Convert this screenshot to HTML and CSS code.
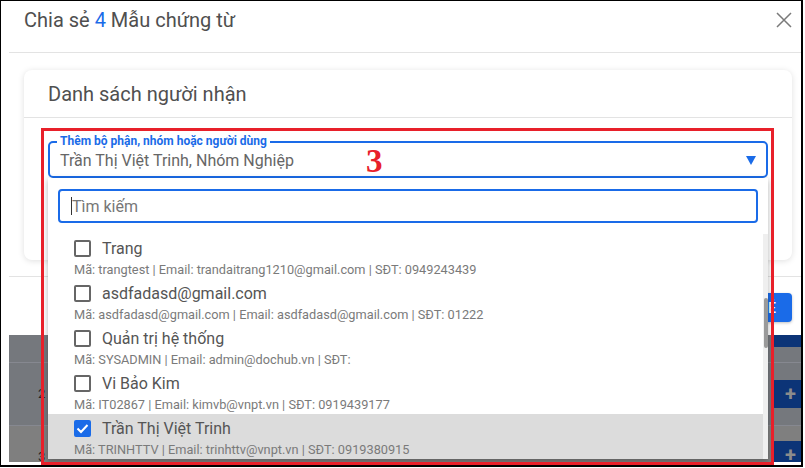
FILE: index.html
```html
<!DOCTYPE html>
<html lang="vi">
<head>
<meta charset="utf-8">
<title>Chia sẻ</title>
<link rel="stylesheet" href="styles.css">
</head>
<body>
<div class="frame">
  <div class="modal">
    <div class="modal-header">
      <div class="modal-title">Chia sẻ <span class="count">4</span> Mẫu chứng từ</div>
      <svg class="close" width="16" height="16" viewBox="0 0 16 16"><path d="M1 1 L15 15 M15 1 L1 15" stroke="#7a7a7a" stroke-width="1.5" fill="none"/></svg>
    </div>
    <div class="modal-body">
      <div class="card">
        <div class="card-header">Danh sách người nhận</div>
        <div class="card-body">
          <div class="select">
            <span class="select-label">Thêm bộ phận, nhóm hoặc người dùng</span>
            <span class="select-value">Trần Thị Việt Trinh, Nhóm Nghiệp</span>
            <svg class="arrow" width="10" height="9" viewBox="0 0 10 9"><polygon points="0,0 10,0 5,9" fill="#1a6be8"/></svg>
          </div>
          <div class="dropdown">
            <div class="search"><span class="caret"></span><span class="placeholder">Tìm kiếm</span></div>
            <div class="list-wrap">
              <div class="list">
                <div class="item">
                  <div class="item-main"><span class="cb"></span><span class="name">Trang</span></div>
                  <div class="sub">Mã: trangtest | Email: trandaitrang1210@gmail.com | SĐT: 0949243439</div>
                </div>
                <div class="item">
                  <div class="item-main"><span class="cb"></span><span class="name">asdfadasd@gmail.com</span></div>
                  <div class="sub">Mã: asdfadasd@gmail.com | Email: asdfadasd@gmail.com | SĐT: 01222</div>
                </div>
                <div class="item">
                  <div class="item-main"><span class="cb"></span><span class="name">Quản trị hệ thống</span></div>
                  <div class="sub">Mã: SYSADMIN | Email: admin@dochub.vn | SĐT:</div>
                </div>
                <div class="item">
                  <div class="item-main"><span class="cb"></span><span class="name">Vi Bảo Kim</span></div>
                  <div class="sub">Mã: IT02867 | Email: kimvb@vnpt.vn | SĐT: 0919439177</div>
                </div>
                <div class="item selected">
                  <div class="item-main"><span class="cb checked"><svg width="13" height="13" viewBox="0 0 13 13"><path d="M1.5 6.5 L5 10 L11.5 3" stroke="#fff" stroke-width="2" fill="none"/></svg></span><span class="name">Trần Thị Việt Trinh</span></div>
                  <div class="sub">Mã: TRINHTTV | Email: trinhttv@vnpt.vn | SĐT: 0919380915</div>
                </div>
              </div>
              <div class="scrollbar"><div class="thumb"></div></div>
            </div>
          </div>
        </div>
      </div>
    </div>
    <div class="modal-footer">
      <button class="btn-primary">CHIA SẺ</button>
    </div>
  </div>
  <div class="backdrop">
    <div class="row row-top"><span class="row-btn partial"></span></div>
    <div class="row"><span class="num">2</span><span class="row-btn">+</span></div>
    <div class="row row-alt"><span class="num">3</span><span class="row-btn">+</span></div>
  </div>
  <div class="annot"></div>
  <div class="annot-num">3</div>
</div>
</body>
</html>
```
FILE: styles.css
```css
* { box-sizing: border-box; }
html, body { margin: 0; padding: 0; background: #fff; }
body { font-family: Roboto, "Noto Sans", Arial, sans-serif; }

.frame {
  position: relative;
  width: 803px;
  height: 467px;
  border-top: 1px solid #000;
  border-left: 1px solid #000;
  border-right: 2px solid #000;
  border-bottom: 2px solid #000;
  overflow: hidden;
  background: #fff;
}

.modal {
  margin-left: 8px;
  width: 792px;
  background: #fff;
  border-radius: 0 0 4px 4px;
}
.modal-header {
  height: 52px;
  border-bottom: 1px solid #e3e3e3;
  display: flex;
  justify-content: space-between;
  align-items: flex-start;
  padding: 8px 9px 0 15px;
}
.modal-title {
  font-size: 20px;
  line-height: 23px;
  color: #4f4f4f;
}
.count { color: #1a6be8; }
.close { margin-top: 3px; }

.modal-body {
  padding: 17px 9px 16px 15px;
  border-bottom: 1px solid #e3e3e3;
}
.card {
  height: 190px;
  background: #fff;
  border-radius: 8px;
  box-shadow: 0 1px 6px rgba(0,0,0,0.13);
}
.card-header {
  padding: 13px 24px 11px 24px;
  font-size: 20px;
  line-height: 23px;
  color: #505050;
  border-bottom: 1px solid #e3e3e3;
}
.card-body {
  position: relative;
  padding: 23px 24px 0 24px;
}
.select {
  position: relative;
  height: 37px;
  border: 2px solid #1a6be8;
  border-radius: 5px;
  display: flex;
  align-items: center;
  padding: 1px 10px 0 10px;
}
.select-label {
  position: absolute;
  left: 7px;
  top: -9px;
  padding: 0 3px;
  background: #fff;
  font-size: 12px;
  line-height: 14px;
  font-weight: 700;
  color: #1a6be8;
}
.select-value {
  flex: 1;
  font-size: 16px;
  line-height: 19px;
  color: #666;
}

.dropdown {
  position: absolute;
  left: 24px;
  top: 60px;
  width: 720px;
  height: 281px;
  background: #fff;
  box-shadow: 0 2px 6px rgba(0,0,0,0.3);
  z-index: 5;
}
.search {
  margin: 11px 10px 0 10px;
  height: 34px;
  border: 2px solid #1a6be8;
  border-radius: 4px;
  display: flex;
  align-items: center;
  padding-left: 11px;
}
.caret {
  width: 1px;
  height: 18px;
  background: #333;
}
.placeholder {
  font-size: 16px;
  line-height: 19px;
  color: #777;
}
.list-wrap {
  margin-top: 11px;
  height: 225px;
  display: flex;
}
.list { flex: 1; }
.item {
  height: 45px;
  padding: 6px 0 0 26px;
}
.item.selected { background: #dcdcdc; }
.item-main {
  display: flex;
  align-items: center;
  height: 17px;
}
.cb {
  width: 17px;
  height: 17px;
  border: 2px solid #666;
  border-radius: 2px;
  margin-right: 11px;
  display: flex;
  align-items: center;
  justify-content: center;
}
.cb.checked { background: #1a6be8; border-color: #1a6be8; }
.name {
  font-size: 16px;
  line-height: 19px;
  color: #555;
}
.sub {
  margin-top: 5px;
  font-size: 12.75px;
  line-height: 15px;
  color: #7a7a7a;
  white-space: nowrap;
}
.scrollbar {
  width: 5px;
  background: #efefef;
  padding-top: 64px;
}
.thumb {
  width: 4px;
  height: 50px;
  margin-left: 1px;
  background: #9a9a9a;
  border-radius: 2px;
}

.modal-footer {
  height: 58px;
  padding: 16px 9px 0 0;
  display: flex;
  justify-content: flex-end;
  align-items: flex-start;
}
.btn-primary {
  height: 29px;
  border: 0;
  border-radius: 4px;
  background: #1a6be8;
  color: #fff;
  font-family: Roboto, Arial, sans-serif;
  font-size: 14px;
  font-weight: 500;
  padding: 0 16px;
  box-shadow: 0 1px 3px rgba(0,0,0,0.25);
}

.backdrop {
  margin-left: 8px;
  width: 792px;
  height: 127px;
  background: #75787d;
  overflow: hidden;
}
.row {
  position: relative;
  height: 63px;
  border-bottom: 1px solid #868890;
  display: flex;
  align-items: center;
  padding-left: 29px;
}
.row-top { height: 28px; align-items: flex-start; }
.row-alt { background: #7f7f7f; border-bottom: 0; }
.num {
  font-size: 13px;
  color: #232323;
  margin-top: -2px;
}
.row-btn {
  margin-left: auto;
  width: 30px;
  height: 28px;
  background: #0c3477;
  border-radius: 4px 0 0 4px;
  color: #8c8c8c;
  font-size: 20px;
  font-weight: 700;
  line-height: 28px;
  padding-left: 14px;
}
.row-btn.partial {
  height: 12px;
  border-radius: 0 0 0 4px;
}
.row-alt .row-btn { align-self: flex-start; margin-top: 15px; }

.annot {
  position: absolute;
  left: 40px;
  top: 127px;
  width: 733px;
  height: 337px;
  border: 3px solid #e8202a;
  z-index: 10;
}
.annot-num {
  position: absolute;
  left: 365px;
  top: 142px;
  font-family: "Liberation Serif", "Times New Roman", serif;
  font-weight: 700;
  font-size: 33px;
  line-height: 36px;
  color: #e8202a;
  z-index: 11;
}
```
